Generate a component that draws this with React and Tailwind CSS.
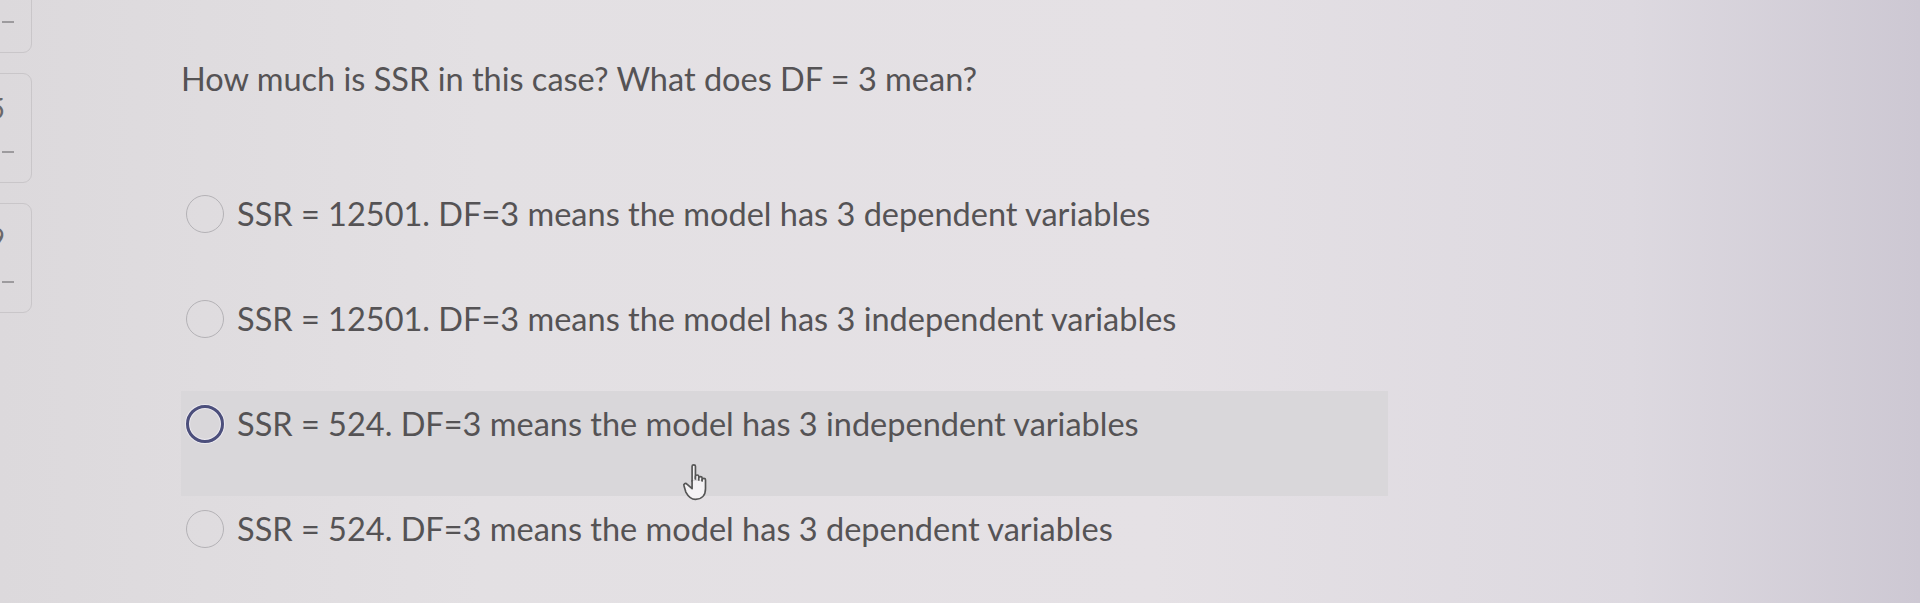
import { useState } from 'react';

const answers = [
  { id: 'a1', text: 'SSR = 12501. DF=3 means the model has 3 dependent variables' },
  { id: 'a2', text: 'SSR = 12501. DF=3 means the model has 3 independent variables' },
  { id: 'a3', text: 'SSR = 524. DF=3 means the model has 3 independent variables' },
  { id: 'a4', text: 'SSR = 524. DF=3 means the model has 3 dependent variables' },
];

const navCards = [
  { id: 'q4', num: '' },
  { id: 'q5', num: '5' },
  { id: 'q6', num: '9' },
];

// pointer shown over the hovered answer
const HandCursor = () => (
  <svg width="30" height="38" viewBox="0 0 24 34" fill="#f4f2f4" stroke="#555" strokeWidth="1.5" strokeLinejoin="round" strokeLinecap="round">
    <path d="M8.5 16V3c0-1.8 3-1.8 3 0v11" />
    <path d="M11.5 14v-2c0-1.7 3-1.7 3 0v3" />
    <path d="M14.5 15v-1.5c0-1.7 3-1.7 3 0V16" />
    <path d="M17.5 16v-1c0-1.7 3-1.7 3 0v8c0 6-3.5 9.5-9 9.5-4 0-6.3-2.2-8.6-6.5L1.3 20.5c-.9-1.6 1.3-3 2.6-1.6L8.5 23V16" />
  </svg>
);

const Radio = ({ active }) =>
  active ? (
    <span className="block w-[38px] h-[38px] rounded-full border-[3px] border-[#4c4f7c] shadow-[0_0_0_1px_#eceaf0,inset_0_0_0_1px_#eceaf0] shrink-0" />
  ) : (
    <span className="block w-[38px] h-[38px] rounded-full border-[1.5px] border-[#b4b2b6] shrink-0" />
  );

const AnswerRow = ({ text, hovered, onEnter }) => (
  <div
    onMouseEnter={onEnter}
    className={`relative h-[105px] w-[1207px] pl-[5px] pt-[13px] ${hovered ? 'bg-[#d9d7da]' : ''}`}
  >
    <label className="flex items-center gap-[13px] cursor-pointer">
      <Radio active={hovered} />
      <span className="text-[32.5px] leading-[40px] text-[#555355] whitespace-nowrap">{text}</span>
    </label>
    {hovered && (
      <div className="absolute left-[500px] top-[72px]">
        <HandCursor />
      </div>
    )}
  </div>
);

export default function App() {
  const [hover, setHover] = useState('a3');

  return (
    <div
      className="w-[1920px] h-[603px] overflow-hidden flex bg-[linear-gradient(90deg,#dcd9dc_0%,#e3e0e3_25%,#e5e1e5_60%,#ddd9e0_85%,#cdc8d3_100%)]"
      style={{ fontFamily: 'Lato, "Open Sans", sans-serif' }}
    >
      {/* question navigator, mostly scrolled off the left edge */}
      <div className="flex flex-col gap-[20px] mt-[-57px] ml-[-40px] w-[72px] shrink-0">
        {navCards.map((c) => (
          <div
            key={c.id}
            className="h-[110px] w-[72px] rounded-[9px] border-[1.5px] border-[#c9c6c9] flex flex-col items-end"
          >
            <span className="mt-[18px] mr-[26px] h-[32px] text-[28px] leading-[32px] text-[#6a686a]">{c.num}</span>
            <span className="mt-[27px] mr-[17px] block w-[12px] h-[2px] bg-[#9d9b9e]" />
          </div>
        ))}
      </div>

      <main className="ml-[149px] pt-[59px]">
        <h2 className="text-[32.5px] leading-[40px] text-[#555355] whitespace-nowrap">
          How much is SSR in this case? What does DF = 3 mean?
        </h2>
        <div className="mt-[82px] flex flex-col">
          {answers.map((a) => (
            <AnswerRow key={a.id} text={a.text} hovered={hover === a.id} onEnter={() => setHover(a.id)} />
          ))}
        </div>
      </main>
    </div>
  );
}
